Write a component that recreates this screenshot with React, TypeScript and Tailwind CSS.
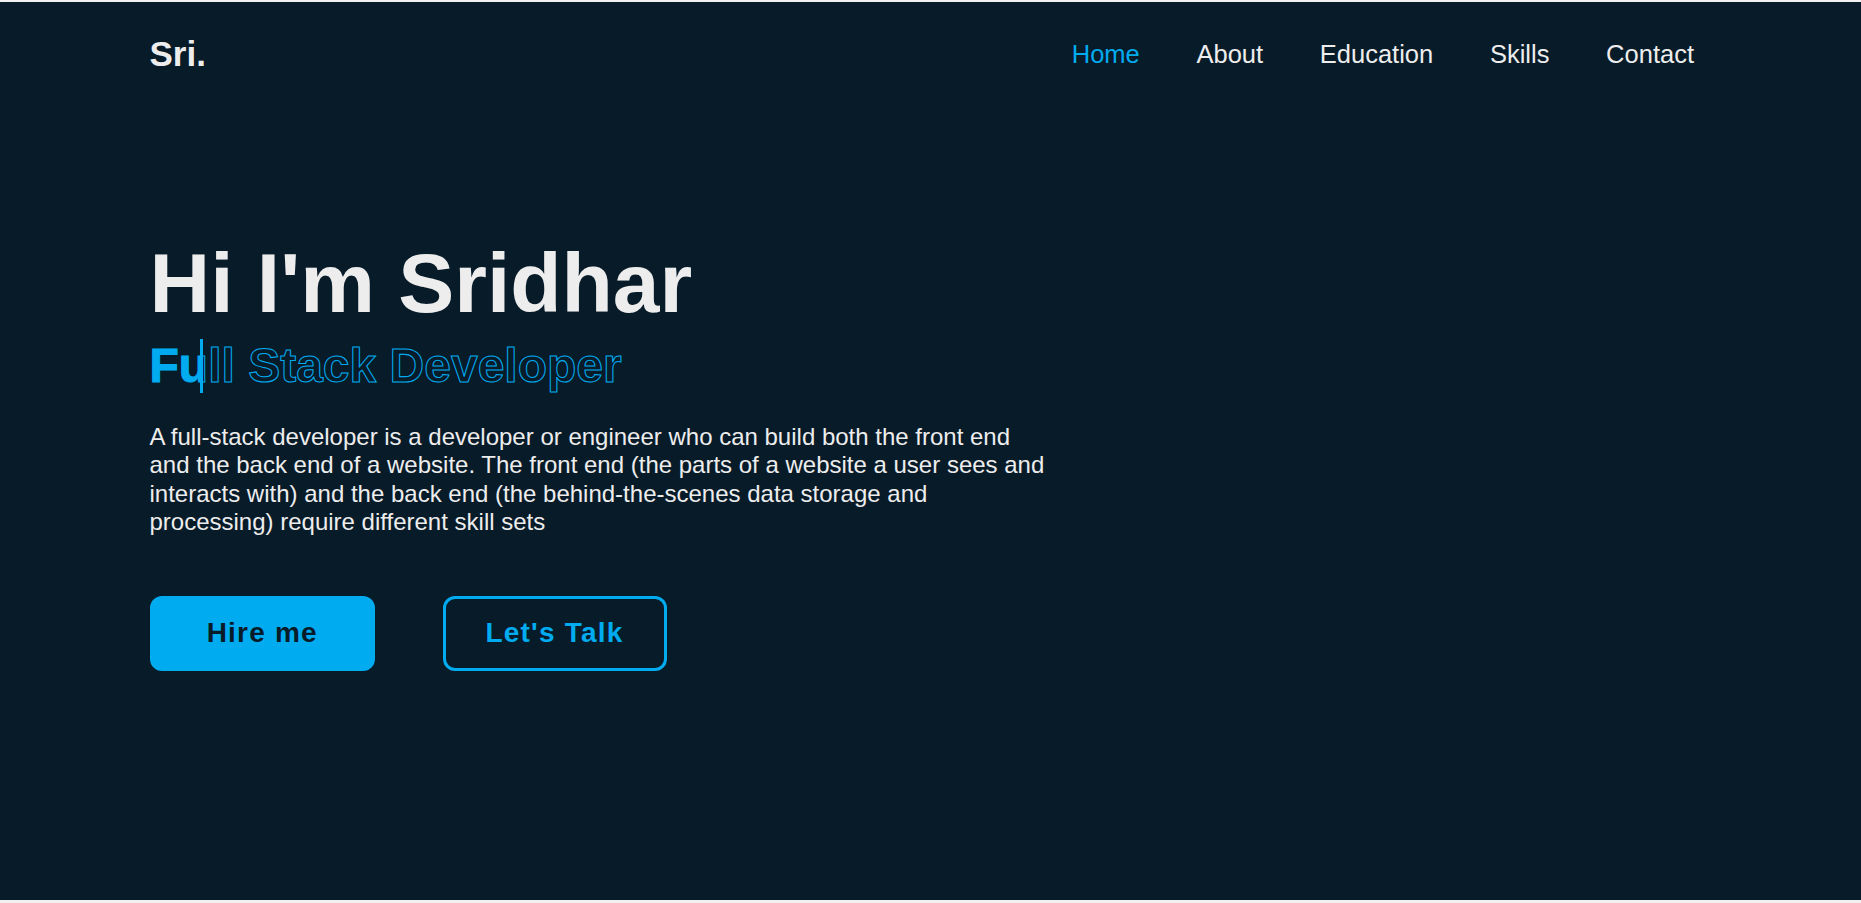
import React from "react";

export default function App() {
  const links = ["Home", "About", "Education", "Skills", "Contact"];
  return (
    <div className="h-[903px] bg-[#f1f1f1] pt-[2px] font-['Liberation_Sans',Arial,sans-serif] overflow-hidden">
      <section className="h-[898px] bg-[#081b29] flex flex-col">
        <header className="flex items-center justify-between pl-[149.5px] pr-[167px] py-[32px]">
          <span className="text-[35px] leading-[40px] font-bold text-[#ededed]">Sri.</span>
          <nav className="flex items-center gap-[56.7px]">
            {links.map((l, i) => (
              <a
                key={l}
                href="#"
                className={`text-[25.5px] leading-[28.5px] ${i === 0 ? "text-[#00abf0]" : "text-[#ededed]"}`}
              >
                {l}
              </a>
            ))}
          </nav>
        </header>
        <main className="pl-[149.5px] pt-[123.4px]">
          <h1 className="text-[84px] leading-[109.2px] font-bold text-[#ededed]">Hi I'm Sridhar</h1>
          <h3 className="relative w-fit text-[48px] leading-[54px] font-bold text-transparent [-webkit-text-stroke:1.05px_#00abf0] whitespace-nowrap">
            Full Stack Developer
            <span className="absolute left-0 top-0 h-full w-[53.5px] overflow-hidden whitespace-nowrap text-[#00abf0] [-webkit-text-stroke:0px_transparent] border-r-[3px] border-[#00abf0]">
              Full Stack Developer
            </span>
          </h3>
          <p className="mt-[30.4px] max-w-[900px] text-[24px] leading-[28.3px] text-[#ededed]">
            A full-stack developer is a developer or engineer who can build both the front end and the back end of a
            website. The front end (the parts of a website a user sees and interacts with) and the back end (the
            behind-the-scenes data storage and processing) require different skill sets
          </p>
          <div className="mt-[59.6px] flex gap-[67.5px]">
            <button className="h-[75px] w-[225.5px] rounded-[12px] border-[3px] border-[#00abf0] bg-[#00abf0] text-[28px] font-bold tracking-[1.2px] text-[#081b29]">
              Hire me
            </button>
            <button className="h-[75px] w-[224px] rounded-[12px] border-[3px] border-[#00abf0] bg-transparent text-[28px] font-bold tracking-[1.2px] text-[#00abf0]">
              Let's Talk
            </button>
          </div>
        </main>
      </section>
    </div>
  );
}
